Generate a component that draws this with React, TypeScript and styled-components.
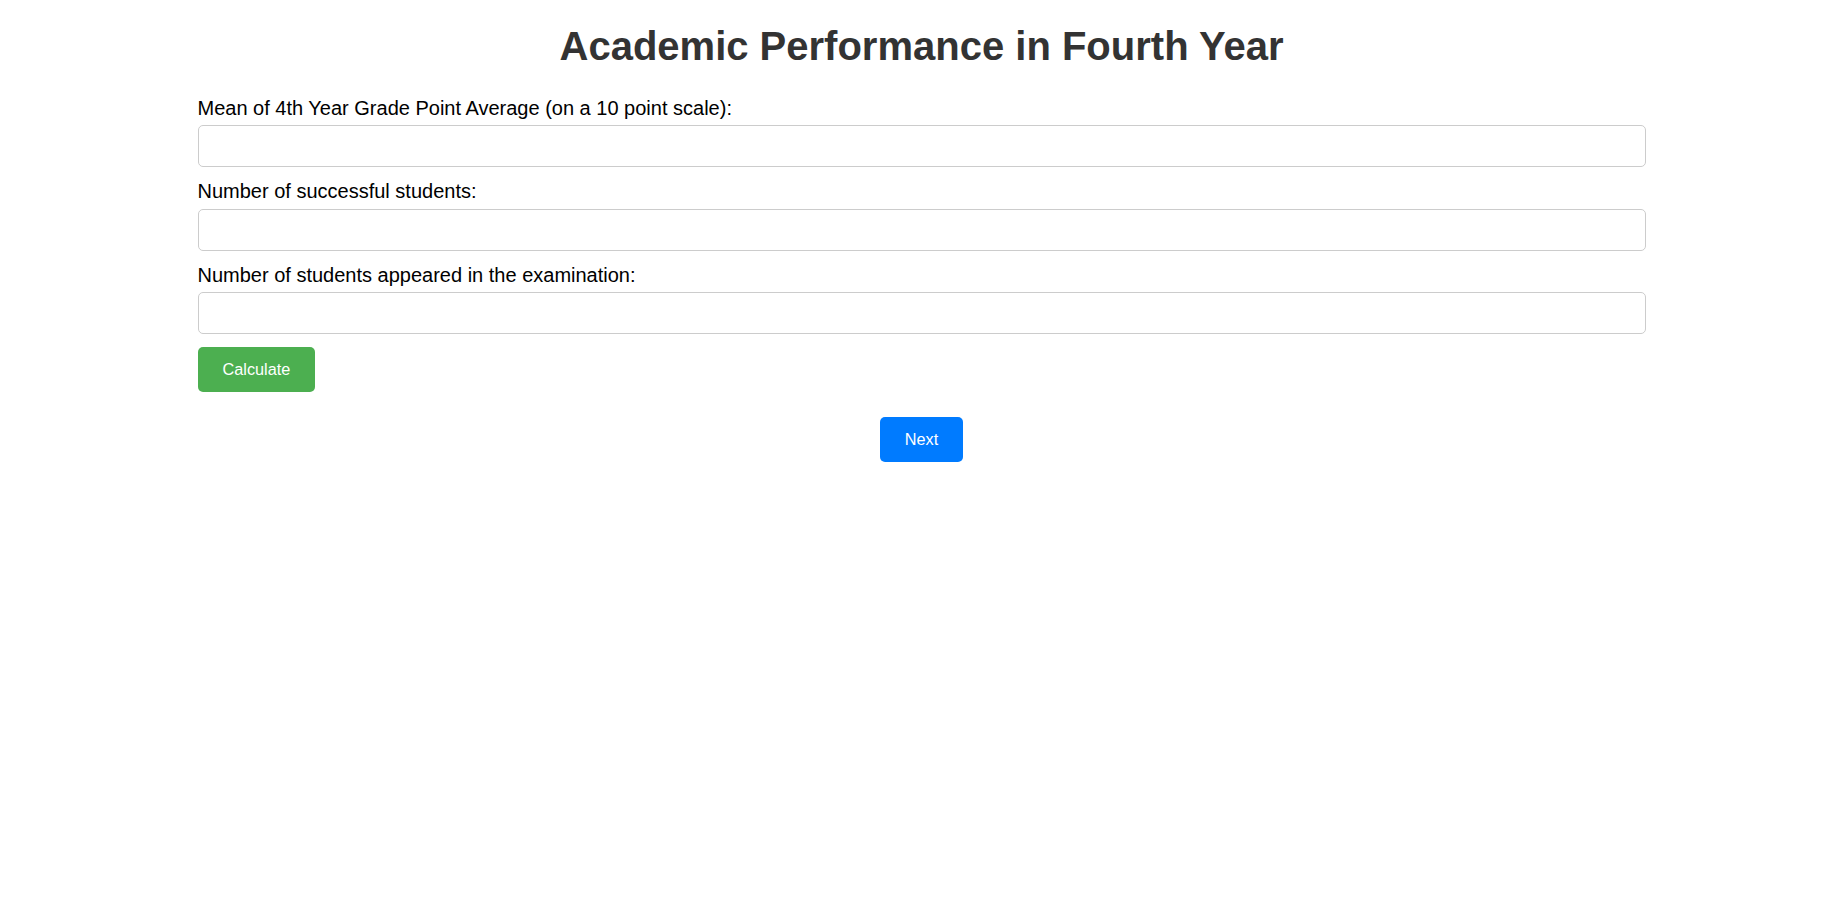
import React, { useState } from 'react';
import styled, { createGlobalStyle } from 'styled-components';

const GlobalStyle = createGlobalStyle`
  body {
    margin: 0;
    background: #fff;
    font-family: "Liberation Sans", Arial, sans-serif;
  }
`;

const Page = styled.div`
  width: 1448px;
  margin: 0 auto;
  padding-right: 2px;
`;

const Title = styled.h1`
  font-size: 40px;
  font-weight: 700;
  color: #333;
  text-align: center;
  margin: 23.5px 0 27.5px;
`;

const Field = styled.div`
  display: flex;
  flex-direction: column;
  margin-bottom: 12.5px;
`;

const Label = styled.label`
  display: block;
  font-size: 20px;
  color: #000;
  padding-top: 0.5px;
  margin-bottom: 5.5px;
`;

const Input = styled.input`
  box-sizing: border-box;
  width: 100%;
  height: 42px;
  padding: 10px;
  font-size: 16px;
  font-family: inherit;
  border: 1.25px solid #ccc;
  border-radius: 5px;
  outline: none;
`;

const Button = styled.button<{ tone: 'green' | 'blue' }>`
  box-sizing: border-box;
  height: 45px;
  padding: 0 25px;
  font-size: 16.25px;
  font-family: inherit;
  color: #fff;
  background-color: ${props => (props.tone === 'green' ? '#4caf50' : '#007bff')};
  border: none;
  border-radius: 5px;
  cursor: pointer;
`;

const NextRow = styled.div`
  display: flex;
  justify-content: center;
  margin-top: 25px;
`;

const fields = [
  { id: 'gpa', label: 'Mean of 4th Year Grade Point Average (on a 10 point scale):' },
  { id: 'successful', label: 'Number of successful students:' },
  { id: 'appeared', label: 'Number of students appeared in the examination:' },
];

const App: React.FC = () => {
  const [values, setValues] = useState<Record<string, string>>({});

  return (
    <>
      <GlobalStyle />
      <Page>
        <Title>Academic Performance in Fourth Year</Title>
        {fields.map(f => (
          <Field key={f.id}>
            <Label htmlFor={f.id}>{f.label}</Label>
            <Input
              id={f.id}
              type="number"
              value={values[f.id] || ''}
              onChange={e => setValues({ ...values, [f.id]: e.target.value })}
            />
          </Field>
        ))}
        <Button tone="green">Calculate</Button>
        <NextRow>
          <Button tone="blue">Next</Button>
        </NextRow>
      </Page>
    </>
  );
};

export default App;
